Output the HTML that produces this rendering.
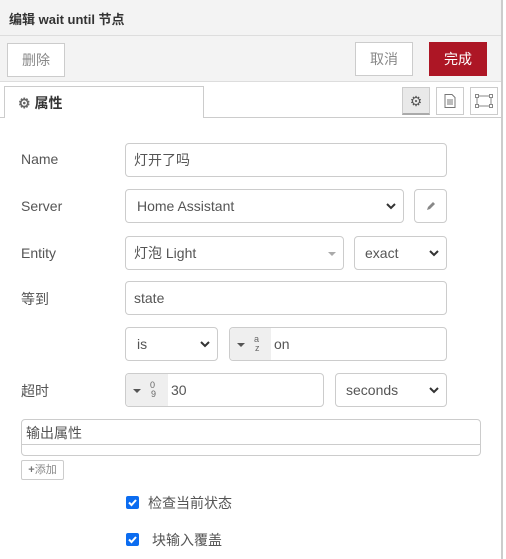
<!DOCTYPE html>
<html><head><meta charset="utf-8"><style>
*{box-sizing:border-box;margin:0;padding:0}
body{width:506px;height:559px;overflow:hidden;background:#fff;font-family:"Liberation Sans","Noto Sans CJK SC",sans-serif;font-size:14px;color:#555;position:relative}
.a{position:absolute}
.inp{position:absolute;border:1px solid #ccc;border-radius:4px;background:#fff;height:34px;line-height:32px;padding-left:8px;color:#555}
.btn{position:absolute;border:1px solid #ccc;background:#fff;color:#888;text-align:center;font-size:14px}
.lbl{position:absolute;left:21px;font-size:14px;color:#555}
.chev{position:absolute;right:7px;top:13px}
.pre{position:absolute;left:0;top:0;bottom:0;background:#efefef;border-radius:4px 0 0 4px}
.cb{position:absolute;width:13px;height:13px;background:#0b6cf0;border-radius:2px}
.tri{position:absolute;left:7px;top:15px;width:0;height:0;border-left:4px solid transparent;border-right:4px solid transparent;border-top:4px solid #555}
.sup{position:absolute;font-size:9px;line-height:9px;color:#666}
</style></head><body>
<div class="a" style="left:0;top:0;width:501px;height:82px;background:#f3f3f3;border-bottom:1px solid #ddd"></div>
<div class="a" style="left:0;top:35px;width:501px;border-top:1px solid #ddd"></div>
<div class="a" style="left:501px;top:0;width:2px;height:559px;background:#ccc"></div>
<div class="a" style="left:9px;top:9px;font-weight:bold;font-size:13px;color:#333">编辑 wait until 节点</div>
<div class="btn" style="left:7px;top:43px;width:58px;height:34px;line-height:32px">删除</div>
<div class="btn" style="left:355px;top:42px;width:58px;height:34px;line-height:32px">取消</div>
<div class="btn" style="left:429px;top:42px;width:58px;height:34px;line-height:32px;background:#ad1625;border-color:#ad1625;color:#fff">完成</div>
<div class="a" style="left:0;top:117px;width:501px;border-top:1px solid #ccc"></div>
<div class="a" style="left:4px;top:86px;width:200px;height:32px;background:#fff;border:1px solid #ccc;border-bottom:none;font-weight:bold;color:#333;padding:6px 0 0 13px;font-size:14px"><span style="color:#666">⚙</span> 属性</div>
<div class="btn" style="left:402px;top:87px;width:28px;height:28px;background:#e9e9e9;border-bottom:2px solid #aaa;line-height:26px;color:#555">⚙</div>
<div class="btn" style="left:436px;top:87px;width:28px;height:28px"><svg width="12" height="14" style="margin-top:6px" viewBox="0 0 12 14"><path d="M1 .5h7l3 3v10H1z M3 6h6M3 8h6M3 10h6" fill="none" stroke="#777"/></svg></div>
<div class="btn" style="left:470px;top:87px;width:28px;height:28px"><svg width="18" height="14" style="margin-top:6px" viewBox="0 0 18 14"><rect x="2" y="2" width="14" height="10" fill="none" stroke="#888"/><rect x="0.5" y=".5" width="3" height="3" fill="#fff" stroke="#888"/><rect x="14.5" y=".5" width="3" height="3" fill="#fff" stroke="#888"/><rect x=".5" y="10.5" width="3" height="3" fill="#fff" stroke="#888"/><rect x="14.5" y="10.5" width="3" height="3" fill="#fff" stroke="#888"/></svg></div>

<div class="lbl" style="top:151px">Name</div>
<div class="inp" style="left:125px;top:143px;width:322px">灯开了吗</div>
<div class="lbl" style="top:198px">Server</div>
<div class="inp" style="left:125px;top:189px;width:279px;padding-left:11px">Home Assistant<svg class="chev" width="10" height="7"><path d="M1 1l4 4 4-4" stroke="#333" stroke-width="2" fill="none"/></svg></div>
<div class="btn" style="left:414px;top:189px;width:33px;height:34px;border-radius:4px;line-height:32px;color:#999"><svg width="12" height="12" style="margin-top:10px"><path d="M2 10l1-3 5-5 2 2-5 5z" fill="#888"/></svg></div>
<div class="lbl" style="top:245px">Entity</div>
<div class="inp" style="left:125px;top:236px;width:219px">灯泡 Light<div class="tri" style="left:auto;right:7px;border-top-color:#aaa"></div></div>
<div class="inp" style="left:354px;top:236px;width:93px;padding-left:10px">exact<svg class="chev" width="10" height="7"><path d="M1 1l4 4 4-4" stroke="#333" stroke-width="2" fill="none"/></svg></div>
<div class="lbl" style="top:289px">等到</div>
<div class="inp" style="left:125px;top:281px;width:322px">state</div>
<div class="inp" style="left:125px;top:327px;width:93px;padding-left:11px">is<svg class="chev" width="10" height="7"><path d="M1 1l4 4 4-4" stroke="#333" stroke-width="2" fill="none"/></svg></div>
<div class="inp" style="left:229px;top:327px;width:218px;padding-left:44px"><div class="pre" style="width:41px"><div class="tri"></div><span class="sup" style="left:24px;top:7px">a</span><span class="sup" style="left:25px;top:16px">z</span></div>on</div>
<div class="lbl" style="top:381px">超时</div>
<div class="inp" style="left:125px;top:373px;width:199px;padding-left:45px"><div class="pre" style="width:42px"><div class="tri"></div><span class="sup" style="left:24px;top:7px">0</span><span class="sup" style="left:25px;top:16px">9</span></div>30</div>
<div class="inp" style="left:335px;top:373px;width:112px;padding-left:10px">seconds<svg class="chev" width="10" height="7"><path d="M1 1l4 4 4-4" stroke="#333" stroke-width="2" fill="none"/></svg></div>
<div class="a" style="left:21px;top:419px;width:460px;height:37px;border:1px solid #ccc;border-radius:4px"></div>
<div class="a" style="left:22px;top:444px;width:458px;border-top:1px solid #ccc"></div>
<div class="a" style="left:26px;top:423px;font-size:14px">输出属性</div>
<div class="btn" style="left:21px;top:460px;width:43px;height:20px;font-size:11px;line-height:18px;border-radius:2px"><b style="color:#777">+</b>添加</div>
<div class="cb" style="left:126px;top:496px"><svg width="13" height="13"><path d="M3 6.5l2.5 2.5 4.5-5" stroke="#fff" stroke-width="2" fill="none"/></svg></div>
<div class="a" style="left:148px;top:493px">检查当前状态</div>
<div class="cb" style="left:126px;top:533px"><svg width="13" height="13"><path d="M3 6.5l2.5 2.5 4.5-5" stroke="#fff" stroke-width="2" fill="none"/></svg></div>
<div class="a" style="left:152px;top:530px">块输入覆盖</div>
</body></html>
